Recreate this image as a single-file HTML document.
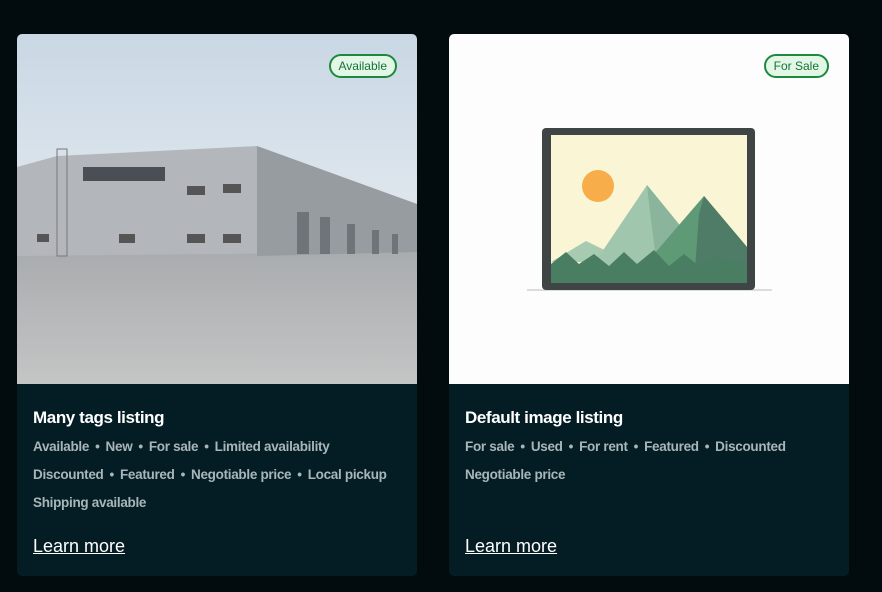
<!DOCTYPE html><html><head><style>
body{margin:0;width:882px;height:592px;background:#020c0f;font-family:"Liberation Sans",sans-serif;overflow:hidden;position:relative}
.card{position:absolute;top:34px;width:400px;height:542px;background:#041d24;border-radius:5px;overflow:hidden}
.img{position:absolute;left:0;top:0;width:400px;height:350px}
.badge{position:absolute;top:20px;right:20px;height:20px;padding:0 8px;border:2px solid #1b8a3e;border-radius:12px;background:#e2f7e6;color:#17713a;font-size:12px;line-height:20px}
h3{position:absolute;left:16px;top:374px;margin:0;color:#fff;font-size:17px;font-weight:bold;letter-spacing:-0.4px}
.tags{position:absolute;left:16px;top:399px;width:380px;color:#a9b6b9;font-size:13.5px;font-weight:bold;line-height:28px;letter-spacing:-0.3px}
.tags span{margin:0 6px}
a{position:absolute;left:16px;top:502px;color:#fff;font-size:18px;text-decoration:underline}
</style></head><body>
<div class="card" style="left:17px">
<svg class="img" viewBox="0 0 400 350">
<defs><linearGradient id="s" x1="0" y1="0" x2="0" y2="1"><stop offset="0" stop-color="#c9d7e4"/><stop offset="1" stop-color="#e5ebf0"/></linearGradient>
<linearGradient id="g" x1="0" y1="0" x2="0" y2="1"><stop offset="0" stop-color="#a9acae"/><stop offset="1" stop-color="#c4c5c5"/></linearGradient></defs>
<rect width="400" height="220" fill="url(#s)"/>
<rect y="218" width="400" height="132" fill="url(#g)"/>
<polygon points="0,133 40,122 240,112 400,170 400,218 0,222" fill="#b3b7bb"/>
<polygon points="240,112 400,170 400,218 240,222" fill="#979ca1"/>
<rect x="66" y="133" width="82" height="14" fill="#4a4f55"/>
<rect x="40" y="115" width="10" height="107" fill="none" stroke="#777" stroke-width="1"/>
<g fill="#555"><rect x="170" y="152" width="18" height="9"/><rect x="206" y="150" width="18" height="9"/><rect x="170" y="200" width="18" height="9"/><rect x="206" y="200" width="18" height="9"/><rect x="102" y="200" width="16" height="9"/><rect x="20" y="200" width="12" height="8"/></g>
<g fill="#6e7479"><rect x="280" y="178" width="12" height="42"/><rect x="303" y="183" width="10" height="37"/><rect x="330" y="190" width="8" height="30"/><rect x="355" y="196" width="7" height="24"/><rect x="375" y="200" width="6" height="20"/></g>
</svg><div class="badge">Available</div>
<h3>Many tags listing</h3>
<div class="tags">Available<span>•</span>New<span>•</span>For sale<span>•</span>Limited availability<br>Discounted<span>•</span>Featured<span>•</span>Negotiable price<span>•</span>Local pickup<br>Shipping available</div>
<a>Learn more</a></div>
<div class="card" style="left:449px">
<svg class="img" viewBox="0 0 400 350">
<rect width="400" height="350" fill="#fdfdfd"/>
<rect x="78" y="255" width="245" height="2" fill="#ddd"/>
<rect x="93" y="94" width="213" height="162" rx="4" fill="#3f4444"/>
<rect x="102" y="101" width="196" height="148" fill="#faf5d5"/>
<circle cx="149" cy="152" r="16" fill="#f7ad4a"/>
<polygon points="102,228 137,207 180,228" fill="#a7cbb1"/>
<polygon points="132,249 198,151 238,200 248,249" fill="#a1c6ae"/>
<polygon points="198,151 238,200 248,249 210,249 200,170" fill="#8ab59c"/>
<polygon points="180,249 255,162 298,213 298,249" fill="#5f9a76"/>
<polygon points="255,162 298,213 298,249 245,249 250,180" fill="#4f7c66"/>
<polygon points="102,249 102,230 117,218 130,230 145,220 160,232 175,218 188,230 205,216 220,232 235,220 250,232 265,222 298,230 298,249" fill="#4a7e63"/>
</svg><div class="badge">For Sale</div>
<h3>Default image listing</h3>
<div class="tags">For sale<span>•</span>Used<span>•</span>For rent<span>•</span>Featured<span>•</span>Discounted<br>Negotiable price</div>
<a>Learn more</a></div>
</body></html>
